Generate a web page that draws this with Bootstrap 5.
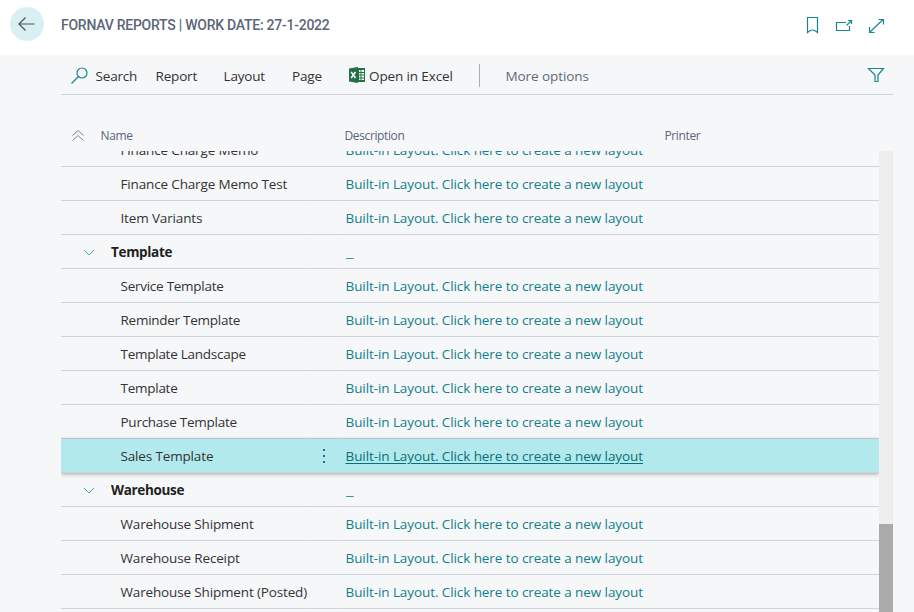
<!DOCTYPE html>
<html lang="en">
<head>
<meta charset="utf-8">
<title>ForNAV Reports</title>
<meta name="viewport" content="width=device-width, initial-scale=1">
<link href="https://cdn.jsdelivr.net/npm/bootstrap@5.3.0/dist/css/bootstrap.min.css" rel="stylesheet">
<style>
body{height:612px;background:#f6f7f9;font-family:"Open Sans","Noto Sans",sans-serif;font-size:13.5px;line-height:20px;color:#333}
.top-bar{height:55px;padding:7px 30px 0 10px}
.back-btn{width:34px;height:34px;background:#d9f0f2}
.page-title{font-family:Roboto,sans-serif;font-size:14px;font-weight:500;letter-spacing:-.25px;color:#5a6677;margin:0 0 0 17px;line-height:34px;padding-top:1px}
.tool-icons{height:38px}
.action-bar{height:40px;margin:0 21px 0 61px;padding:2px 8px 0 0;border-bottom:1px solid #d0d3d9}
.action-bar a{color:#333;text-decoration:none;white-space:nowrap;letter-spacing:-.17px}
.action-bar .act-search{width:94.5px}
.action-bar .act-report{width:68px}
.action-bar .act-layout{width:68.5px}
.action-bar .act-page{width:56px}
.action-bar .act-excel{width:131px;letter-spacing:-.12px}
.action-bar .act-more{color:#5f6a79;margin-left:25.5px;letter-spacing:-.08px}
.act-excel svg{margin-top:-2px}
.filter-icon{margin-top:-2px}
.divider{width:1px;height:23px;background:#a7adb6;margin-top:-1px}
.list-head{height:56px;padding-top:31px;margin:0 21px 0 61px;font-size:12px;letter-spacing:-.38px;color:#5a6677}
.head-toggle{margin:3px 0 0 8px}
.head-name{width:253.5px;padding-left:9.5px}
.head-desc{width:320px}
.list-area{height:461px;margin:0 21px 0 61px}
.list-rows{margin-top:-18px}
.list-line{height:34px;white-space:nowrap}
.list-line>div{border-bottom:1px solid #d0d3d9;line-height:35px;height:34px}
.list-line .col-name,.list-line .col-menu{border-right:1px solid transparent}
.col-name{width:249px;padding-left:59.5px;letter-spacing:-.15px}
.tight .col-name{letter-spacing:-.26px}
.col-menu{width:30px}
.col-desc{padding-left:5.5px;letter-spacing:-.085px}
.group-line .col-name{padding-left:22px;font-weight:700;color:#212121;letter-spacing:-.33px}
.list-line a{color:#128089;text-decoration:none}
.group-line a{display:inline-block;transform:scaleX(1.3);transform-origin:0 0}
.chosen{background:#b2e9ec;box-shadow:0 1px 4px rgba(0,0,0,.35);position:relative}
.list-line.chosen a{color:#0c6f78;text-decoration:underline;text-underline-offset:2px}
.track{width:14px;background:#eee;position:relative;z-index:1}
.thumb{height:88px;background:#aaa}
</style>
</head>
<body class="overflow-hidden">
<header class="top-bar bg-white d-flex">
  <a href="#" class="back-btn rounded-circle" aria-label="Back">
    <svg class="d-block" width="34" height="34" fill="none" stroke="#505050" stroke-width="1.2"><path d="M9 17h15.500M15.500 10.500L9 17l6.500 6.500"/></svg></a>
  <h1 class="page-title">FORNAV REPORTS | WORK DATE: 27-1-2022</h1>
  <div class="tool-icons ms-auto d-flex align-items-center">
    <svg width="80" height="20" fill="none" stroke="#188790" stroke-width="1.2"><path d="M3.500 1.500h10v15l-2-1.500q-3-2-6 0l-2 1.500zM42 6.500h-9.500v8h13V10M42.500 9.500l4.500-4.500M44 4.500h3.500V8M66 16L79 3.500M74.500 3.500h5V8.500M65.500 11v5.500h5"/></svg>
  </div>
</header>
<nav class="action-bar d-flex align-items-center">
  <a href="#" class="act-search d-flex"><svg width="34.500" height="20" fill="none" stroke="#188790" stroke-width="1.200"><circle cx="21" cy="7" r="5"/><path d="M17.500 10.500L10.500 17.500"/></svg>Search</a>
  <a href="#" class="act-report">Report</a>
  <a href="#" class="act-layout">Layout</a>
  <a href="#" class="act-page">Page</a>
  <a href="#" class="act-excel d-flex align-items-center"><svg class="flex-shrink-0 me-1" width="17" height="16"><path fill="#217346" d="M1 1.500L10 0v16l-9-1.500zM10 1h7v14h-7z"/><path fill="none" stroke="#fff" stroke-width="1.500" d="M3.200 5l4.300 6M7.500 5l-4.300 6"/><path fill="#fff" d="M11 3h1.500v2H11zM13.500 3H16v2h-2.500zM11 6h1.500v1.500H11zM13.500 6H16v1.500h-2.500zM11 8.500h1.500v2H11zM13.500 8.500H16v2h-2.500zM11 11.500h1.500v1.500H11zM13.500 11.500H16v1.500h-2.500z"/></svg>Open in Excel</a>
  <span class="divider"></span>
  <a href="#" class="act-more">More options</a>
  <svg class="filter-icon ms-auto" width="18" height="18" fill="none" stroke="#188790" stroke-width="1.200"><path d="M1.500 2.500h15L11 9v6.500H8V9z"/></svg>
</nav>
<div class="list-head d-flex">
  <svg class="head-toggle" width="22" height="14" fill="none" stroke="#7b8490"><path d="M3.500 6.500l5.500-5 5.500 5M3.500 11.500l5.500-5 5.500 5"/></svg>
  <div class="head-name">Name</div><div class="head-desc">Description</div><div>Printer</div>
</div>
<main class="list-area d-flex overflow-hidden">
  <div class="list-rows flex-grow-1" id="rows"></div>
  <div class="track d-flex flex-column justify-content-end"><div class="thumb"></div></div>
</main>
<script>
const lines = ["Finance Charge Memo","Finance Charge Memo Test","Item Variants","#Template","Service Template","Reminder Template","Template Landscape","Template","Purchase Template","*Sales Template","#Warehouse","Warehouse Shipment","Warehouse Receipt","Warehouse Shipment (Posted)"];
const chevron = '<svg class="me-3" width="12" height="8" fill="none" stroke="#4fa5ad"><path d="M1 1l5 5 5-5"/></svg>';
const dots = '<svg class="d-block" width="29" height="33" fill="#2a5f8f"><path d="M13 10h2v2h-2zM13 16h2v2h-2zM13 22h2v2h-2z"/></svg>';
document.getElementById('rows').innerHTML = lines.map(t => {
  const group = t[0] === '#', chosen = t[0] === '*', name = t.replace(/^[#*]/, '');
  const tight = !group && !chosen && name.includes('Template');
  return `<div class="list-line d-flex${group ? ' group-line' : ''}${chosen ? ' chosen' : ''}${tight ? ' tight' : ''}">` +
    `<div class="col-name">${group ? chevron : ''}${name}</div>` +
    `<div class="col-menu">${chosen ? dots : ''}</div>` +
    `<div class="col-desc flex-grow-1"><a href="#">${group ? '_' : 'Built-in Layout. Click here to create a new layout'}</a></div></div>`;
}).join('');
</script>
</body>
</html>
